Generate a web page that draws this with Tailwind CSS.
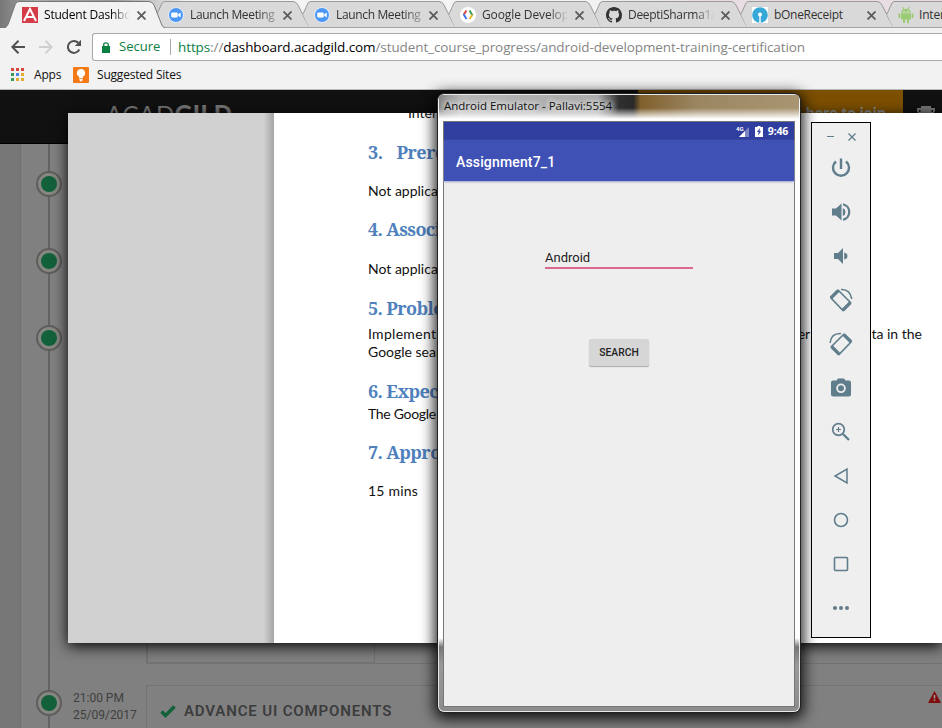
<!DOCTYPE html>
<html lang="en">
<head>
<meta charset="utf-8">
<title>Student Dashboard</title>
<script src="https://cdn.jsdelivr.net/npm/@tailwindcss/browser@4"></script>
</head>
<body class="w-[942px] h-[728px] overflow-hidden bg-[#808080] font-['Open_Sans','Noto_Sans',sans-serif] relative">
<svg class="hidden">
  <symbol id="inactive" viewBox="0 0 158 28"><path d="M12 1.5H141q4 0 5 3L158 28H11L5 14 10.500 3Q11 1.500 12 1.500Z" fill="#d9d9d9"/><path d="M5 14 10 3Q11 1.500 13 1.500H141Q144 1.500 146 5L157.500 28" fill="none" stroke="#999"/></symbol>
  <symbol id="x" viewBox="0 0 9 9"><path d="M.5 .5 8.500 8.500M8.500 .5 .5 8.500" stroke="#5c5c5c" stroke-width="1.800"/></symbol>
  <symbol id="zoomcam" viewBox="0 0 16 16"><circle cx="8" cy="8" r="7.500" fill="#4a97f5" stroke="#e8eef8"/><rect x="3.200" y="5.500" width="6.500" height="5" rx="1" fill="#fff"/><path d="M10.200 7.300 12.700 5.600V10.400L10.200 8.700Z" fill="#fff"/></symbol>
</svg>

<header class="relative flex flex-col h-[90px] bg-[#f2f2f2]">
  <nav class="relative flex h-7 pl-[6px] text-[12px] text-[#333] bg-[linear-gradient(to_right,#777,#aaa_4%,#999_12%,#f4f4f4_20%,#f4f4f4_62%,#e9dde4_75%,#e9dde4)] overflow-hidden">
    <div class="relative z-10 flex items-center w-[146px] shrink-0 pl-4 pt-[2px]">
      <svg class="absolute -left-[6px] top-0 w-[166px] h-7" viewBox="0 0 166 28"><path d="M5 28Q8 26 9 22L15 5Q16 1.500 19 1.500H149Q152 1.500 154 5L161 23Q162 27 165 28Z" fill="#f2f2f2"/><path d="M5 28Q8 26 9 22L15 5Q16 1.500 19 1.500H149Q152 1.500 154 5L161 23Q162 27 165 28" fill="none" stroke="#777"/></svg>
      <svg class="relative w-4 h-4" viewBox="0 0 16 16"><rect width="16" height="16" fill="#d63c48"/><path d="M2 14 8 2 14 14M4.500 10H11.500" fill="none" stroke="#fff" stroke-width="2"/></svg>
      <span class="relative ml-[6px] w-[86px] overflow-hidden whitespace-nowrap text-black tracking-[-0.2px] [mask-image:linear-gradient(to_right,#000_78%,transparent)]">Student Dashbo</span>
      <svg class="relative ml-[7px] w-[9px] h-[9px]"><use href="#x"/></svg>
    </div>
    <div class="relative flex items-center w-[146px] shrink-0 pl-4 pt-[2px]">
      <svg class="absolute left-0 top-0 w-[158px] h-7"><use href="#inactive"/></svg>
      <svg class="relative w-4 h-4"><use href="#zoomcam"/></svg>
      <span class="relative ml-[6px] w-[86px] overflow-hidden whitespace-nowrap tracking-[-0.35px] [mask-image:linear-gradient(to_right,#000_78%,transparent_110%)]">Launch Meeting</span>
      <svg class="relative ml-[7px] w-[9px] h-[9px]"><use href="#x"/></svg>
    </div>
    <div class="relative flex items-center w-[146px] shrink-0 pl-4 pt-[2px]">
      <svg class="absolute left-0 top-0 w-[158px] h-7"><use href="#inactive"/></svg>
      <svg class="relative w-4 h-4"><use href="#zoomcam"/></svg>
      <span class="relative ml-[6px] w-[86px] overflow-hidden whitespace-nowrap tracking-[-0.35px] [mask-image:linear-gradient(to_right,#000_78%,transparent_110%)]">Launch Meeting</span>
      <svg class="relative ml-[7px] w-[9px] h-[9px]"><use href="#x"/></svg>
    </div>
    <div class="relative flex items-center w-[146px] shrink-0 pl-4 pt-[2px]">
      <svg class="absolute left-0 top-0 w-[158px] h-7"><use href="#inactive"/></svg>
      <svg class="relative w-4 h-4" viewBox="0 0 16 16"><circle cx="8" cy="8" r="8" fill="#fff"/><g fill="none" stroke-width="2"><path d="M6.500 3.500 3.800 7.500" stroke="#e0483c"/><path d="M3.500 7 6.500 12" stroke="#4377e8"/><path d="M9.500 3.500 12.500 8.500" stroke="#3b9c58"/><path d="M12.300 8 9.500 12" stroke="#efb52a"/></g></svg>
      <span class="relative ml-[6px] w-[86px] overflow-hidden whitespace-nowrap tracking-[-0.1px] [mask-image:linear-gradient(to_right,#000_78%,transparent)]">Google Develop</span>
      <svg class="relative ml-[7px] w-[9px] h-[9px]"><use href="#x"/></svg>
    </div>
    <div class="relative flex items-center w-[146px] shrink-0 pl-4 pt-[2px]">
      <svg class="absolute left-0 top-0 w-[158px] h-7"><use href="#inactive"/></svg>
      <svg class="relative w-4 h-4" viewBox="0 0 16 16"><path fill="#333" d="M8 0C3.580 0 0 3.580 0 8c0 3.540 2.290 6.530 5.470 7.590.4.070.55-.17.55-.38 0-.19-.01-.82-.01-1.490-2.010.37-2.530-.49-2.690-.94-.09-.23-.48-.94-.82-1.130-.28-.15-.68-.52-.01-.53.63-.01 1.080.58 1.230.82.72 1.210 1.870.87 2.330.66.07-.52.28-.87.51-1.070-1.780-.2-3.640-.89-3.640-3.950 0-.87.31-1.590.82-2.150-.08-.2-.36-1.020.08-2.120 0 0 .67-.21 2.200.82.64-.18 1.320-.27 2-.27s1.360.09 2 .27c1.530-1.040 2.200-.82 2.200-.82.44 1.100.16 1.920.08 2.120.51.56.82 1.270.82 2.150 0 3.070-1.870 3.750-3.650 3.950.29.25.54.73.54 1.480 0 1.070-.01 1.930-.01 2.200 0 .21.15.46.55.38A8.010 8.010 0 0 0 16 8c0-4.420-3.580-8-8-8Z"/></svg>
      <span class="relative ml-[6px] w-[86px] overflow-hidden whitespace-nowrap tracking-[-0.3px] [mask-image:linear-gradient(to_right,#000_78%,transparent)]">DeeptiSharma1/</span>
      <svg class="relative ml-[7px] w-[9px] h-[9px]"><use href="#x"/></svg>
    </div>
    <div class="relative flex items-center w-[146px] shrink-0 pl-4 pt-[2px]">
      <svg class="absolute left-0 top-0 w-[158px] h-7"><use href="#inactive"/></svg>
      <svg class="relative w-4 h-4" viewBox="0 0 16 16"><rect width="16" height="16" fill="#fff"/><circle cx="8" cy="8" r="7.800" fill="#36a9d8"/><circle cx="8" cy="7.500" r="2" fill="#fff"/><path d="M7.300 8H8.700V16H7.300Z" fill="#fff"/></svg>
      <span class="relative ml-[6px] w-[86px] overflow-hidden whitespace-nowrap tracking-[-0.3px]">bOneReceipt</span>
      <svg class="relative ml-[7px] w-[9px] h-[9px]"><use href="#x"/></svg>
    </div>
    <div class="relative flex items-center w-[146px] shrink-0 pl-4 pt-[2px]">
      <svg class="absolute left-0 top-0 w-[158px] h-7"><use href="#inactive"/></svg>
      <svg class="relative w-4 h-4" viewBox="0 0 16 16" fill="#9bcb74"><path d="M3 5.500Q3.400 1.700 8 1.700T13 5.500ZM3 6.200H13V12.500H3ZM.500 6.500H2.300V11H.500ZM13.700 6.500H15.500V11H13.700ZM5 12H7V16H5ZM9 12H11V16H9Z"/><path d="M4.500 0 6 2.500M11.500 0 10 2.500" stroke="#9bcb74"/><circle cx="6" cy="4" r=".6" fill="#fff"/><circle cx="10" cy="4" r=".6" fill="#fff"/></svg>
      <span class="relative ml-[5px] whitespace-nowrap tracking-[-0.2px]">Internet</span>
    </div>
    <div class="absolute left-[164px] right-0 bottom-0 h-px bg-[#a3a3a3]"></div>
  </nav>
  <div class="flex items-center h-[38px] pl-[11px]">
    <svg class="w-[14px] h-[14px]" viewBox="0 0 14 14" fill="none" stroke="#505050" stroke-width="2"><path d="M14 7H1.500M7.500 .8 1.300 7 7.500 13.200"/></svg>
    <svg class="ml-[14px] w-[14px] h-[14px]" viewBox="0 0 14 14" fill="none" stroke="#d0d0d0" stroke-width="2"><path d="M0 7H12.500M6.500 .8 12.700 7 6.500 13.200"/></svg>
    <svg class="ml-[13px] w-[16px] h-[16px]" viewBox="0 0 16 16"><path d="M13.300 10.500A6 6 0 1 1 12.300 3.800" fill="none" stroke="#505050" stroke-width="2"/><path d="M15 .8V7H8.800Z" fill="#505050"/></svg>
    <div class="flex items-center ml-[10px] h-[28px] flex-1 border border-r-0 border-[#a9a9a9] rounded-l-[3px] bg-white pl-[9px] text-[13.5px] whitespace-nowrap">
      <svg class="w-2 h-[11px] shrink-0" viewBox="0 0 8 11"><path d="M0 4H8V11H0Z" fill="#0b8043"/><path d="M1.700 5V2.800Q1.700.8 4 .8T6.300 2.800V5" fill="none" stroke="#0b8043" stroke-width="1.300"/></svg>
      <span class="ml-[9px] w-[51px] text-[#0b8043] shrink-0 text-[13px]">Secure</span>
      <span class="w-px h-4 bg-[#aaa]"></span>
      <span class="ml-[7px] text-[#858585] tracking-[-0.1px]"><span class="text-[#0b8043]">https</span>://<span class="text-black">dashboard.acadgild.com</span>/student_course_progress/android-development-training-certification</span>
    </div>
  </div>
  <div class="flex items-center h-[17px] text-[12px] text-[#111] pl-[11px]">
    <svg class="w-[13px] h-[13px]" viewBox="0 0 13 13"><path d="M0 0H3V3H0ZM5 0H8V3H5ZM10 0H13V3H10Z" fill="#d8453c"/><path d="M0 5H3V8H0ZM0 10H3V13H0Z" fill="#3a9a57"/><path d="M5 5H8V8H5Z" fill="#4a86e0"/><path d="M10 5H13V8H10ZM5 10H8V13H5ZM10 10H13V13H10Z" fill="#e4ac2e"/></svg>
    <span class="ml-[10px] w-[39px] tracking-[-0.2px]">Apps</span>
    <svg class="w-4 h-4" viewBox="0 0 16 16"><rect width="16" height="16" rx="1" fill="#f47a18"/><path d="M8 2A4 4 0 0 1 10 9.500V11H6V9.500A4 4 0 0 1 8 2ZM6.400 11.700H9.600V13L8.500 14.500H7.500L6.400 13Z" fill="#fff"/></svg>
    <span class="ml-2 tracking-[-0.2px]">Suggested Sites</span>
  </div>
  <div class="absolute bottom-0 left-0 right-0 h-px bg-[#b5b8ba]"></div>
</header>

<main class="h-[638px]">
  <div class="flex justify-between h-[54px] bg-[#111] border-b border-black">
    <div class="ml-[106px] mt-[13px] text-[24px] leading-[22px] text-[#777] font-['Lato',sans-serif] tracking-[0.6px]">ACAD<span class="font-black">GILD</span></div>
    <div class="flex">
      <div class="w-[265px] bg-[#7d5000] text-right pr-[17px] pt-[13px] text-[14px] leading-5 font-bold text-[#8b8b8b]">Click here to join</div>
      <div class="w-[39px] pl-[14px] pt-4"><svg class="w-[18px] h-[14px]" viewBox="0 0 18 14"><path d="M4 0H14V2H18V5Q17 8 13 8L10 11H8L5 8Q1 8 0 5V2H4Z" fill="#777"/><path d="M2 4H3.500V6H2ZM14.500 4H16V6H14.500Z" fill="#111"/></svg></div>
    </div>
  </div>
  <div class="flex h-[584px] bg-[#808080]">
    <div class="w-[21px] bg-[#777] border-r border-[#707070]"></div>
    <div class="flex flex-col items-center w-[56px] bg-[linear-gradient(#636363,#636363)] bg-[length:2px_100%] bg-no-repeat bg-center pt-[27px] gap-[51px]">
      <div class="w-[26px] h-[26px] rounded-full border-2 border-[#5e5c5c] bg-[#858780] p-[3px]"><div class="w-full h-full rounded-full bg-[#12613a]"></div></div>
      <div class="w-[26px] h-[26px] rounded-full border-2 border-[#5e5c5c] bg-[#858780] p-[3px]"><div class="w-full h-full rounded-full bg-[#12613a]"></div></div>
      <div class="w-[26px] h-[26px] rounded-full border-2 border-[#5e5c5c] bg-[#858780] p-[3px]"><div class="w-full h-full rounded-full bg-[#12613a]"></div></div>
      <div class="mt-[288px] w-[26px] h-[26px] rounded-full border-2 border-[#5e5c5c] bg-[#858780] p-[3px]"><div class="w-full h-full rounded-full bg-[#12613a]"></div></div>
    </div>
    <div class="w-[69px] -ml-1 pt-[546px] text-[12px] leading-[17px] text-[#3f3f3f] font-['Roboto',sans-serif] whitespace-nowrap">21:00 PM<br>25/09/2017</div>
    <div class="flex-1 ml-1 flex flex-col">
      <div class="h-[520px] border-l-2 border-b border-[#737373]"><div class="w-[227px] h-full border-r border-b border-[#737373]"></div></div>
      <div class="mt-[21px] flex-1 flex justify-between items-start border-l border-t border-[#737373] pl-[13px] pt-[16px]">
        <div class="flex items-center h-[19px]">
          <svg class="w-[16px] h-[13px]" viewBox="0 0 16 13"><path d="M1.500 6.500 5.500 10.500 14.500 1.500" fill="none" stroke="#12613a" stroke-width="3.500"/></svg>
          <span class="ml-[8px] text-[15px] font-semibold text-[#3c3c3c] font-['Roboto',sans-serif] tracking-[0.850px] whitespace-nowrap">ADVANCE UI COMPONENTS</span>
        </div>
        <svg class="-mt-[11px] mr-[1px] w-[13px] h-[12px]" viewBox="0 0 13 12"><path d="M6.500 0 13 12H0Z" fill="#800c0c"/><path d="M5.700 4H7.300V7.500H5.700ZM5.700 8.500H7.300V10H5.700Z" fill="#999"/></svg>
      </div>
    </div>
  </div>
</main>

<section class="absolute left-[68px] top-[113px] w-[874px] h-[530px] shadow-[0_3px_14px_#000]"></section>
<section class="absolute left-[68px] top-[113px] w-[874px] h-[530px] flex bg-[#d1d1d1] overflow-hidden">
  <div class="w-[206px] bg-gradient-to-l from-[#a4a4a4] to-[#d1d1d1] to-5%"></div>
  <div class="flex-1 bg-white pl-[94px] flex flex-col text-[14px] leading-[18px] text-[#111] font-['Lato',sans-serif] whitespace-nowrap">
    <p class="-mt-[9px] pl-10">Inter</p>
    <h2 class="mt-[21px] text-[18px] font-bold text-[#4f81bd] font-['Noto_Serif','Liberation_Serif',serif] tracking-[-0.5px]">3.<span class="ml-[14px]">Prereq</span></h2>
    <p class="mt-[21px]">Not applicable</p>
    <h2 class="mt-[20px] text-[18px] font-bold text-[#4f81bd] font-['Noto_Serif','Liberation_Serif',serif] tracking-[-0.6px]">4. Associ</h2>
    <p class="mt-[22px]">Not applicable</p>
    <h2 class="mt-[21px] text-[18px] font-bold text-[#4f81bd] font-['Noto_Serif','Liberation_Serif',serif] tracking-[-0.6px]">5. Problem</h2>
    <p class="mt-[8px] flex justify-between pr-5"><span class="tracking-[0.3px]">Implement</span><span>user search data in the</span></p>
    <p>Google search</p>
    <h2 class="mt-[21px] text-[18px] font-bold text-[#4f81bd] font-['Noto_Serif','Liberation_Serif',serif] tracking-[-0.6px]">6. Expect</h2>
    <p class="mt-[5px] tracking-[-0.3px]">The Google</p>
    <h2 class="mt-[20px] text-[18px] font-bold text-[#4f81bd] font-['Noto_Serif','Liberation_Serif',serif] tracking-[-0.6px]">7. Approx</h2>
    <p class="mt-[21px] tracking-[0.2px]">15 mins</p>
  </div>
</section>

<section class="absolute left-[437px] top-[93px] w-[364px] h-[620px] rounded-[7px] border border-[#222] shadow-[0_3px_14px_3px_rgba(0,0,0,0.85)] overflow-hidden bg-[#8d8d8d]">
  <div class="w-full h-full rounded-[6px] border border-white/80 bg-[linear-gradient(#999_0,#fff_26px,#fff_543px,#777_552px,#999_570px,#8c8c8c)] px-[4px] pb-[4px]">
    <div class="-mx-1 h-[26px] pl-[5px] pt-[2px] text-[11.5px] leading-[18px] text-[#111] tracking-[0px] bg-[linear-gradient(to_bottom,transparent_50%,#fff_92%),linear-gradient(to_right,#858585,#b5b5b5_6%,#aaa_44%,#303030_50%,#292929_54%,#80602c_56%,#9b8662_72%,#a99571)]"><span class="[text-shadow:0_0_6px_#fff,0_0_6px_#fff]">Android Emulator - Pallavi:5554</span></div>
    <div class="h-[586px] border border-[#777] bg-[#eee] flex flex-col font-['Roboto',sans-serif]">
      <div class="flex items-center justify-end h-[18px] shrink-0 bg-[#303f9f] pr-[6px] text-white">
        <svg class="w-[13px] h-[12px]" viewBox="0 0 13 12"><path d="M13 2V12H3Z" fill="#7c86c5"/><path d="M9 6V12H3Z" fill="#fff"/><text x="0" y="5.500" font-size="6" font-weight="700" fill="#fff">4G</text></svg>
        <svg class="ml-[6px] w-2 h-[11px]" viewBox="0 0 8 11"><path d="M0 1H2.500V0H5.500V1H8V11H0Z" fill="#fff"/><path d="M5 2 2 6H3.700L3 9.500 6.200 5.200H4.500Z" fill="#303f9f"/></svg>
        <span class="ml-[5px] text-[10.5px] leading-4 font-bold font-['Noto_Sans',sans-serif] tracking-[-0.2px]">9:46</span>
      </div>
      <div class="h-[41px] shrink-0 bg-[#3f51b5] pl-3 text-white text-[14px] font-medium leading-[44px] tracking-[0.150px] shadow-[0_1px_2px_#9aa0c8]">Assignment7_1</div>
      <div class="ml-[101px] mt-[67px] w-[148px] h-[21px] border-b-2 border-[#d9698f] text-[13px] leading-[19px] text-[#222]">Android</div>
      <div class="mt-[70px] ml-[145px] w-[60px] h-[27px] rounded-[2px] bg-[#d6d6d6] shadow-[0_1px_1px_#aaa] text-center text-[10.300px] font-medium leading-[27px] text-[#222]">SEARCH</div>
    </div>
  </div>
</section>

<aside class="absolute left-[811px] top-[122px] w-[60px] h-[516px] border border-black bg-[#efefef] flex flex-col items-center text-[#5f7d8b]">
  <div class="flex items-center h-[23px] pt-1 gap-[14px] w-full pl-[15px]">
    <div class="w-[7px] h-px bg-[#5f7d8b]"></div>
    <svg class="w-[8px] h-[8px]" viewBox="0 0 8 8"><path d="M.5 .5 7.500 7.500M7.500 .5 .5 7.500" stroke="currentColor" stroke-width="1.300"/></svg>
  </div>
  <div class="flex flex-col items-center [&>svg]:w-6 [&>svg]:h-6 gap-5 mt-[10px]">
    <svg viewBox="0 0 24 24" fill="none" stroke="currentColor" stroke-width="2.400"><path d="M12 2.500V13M7 5.500A8 8 0 1 0 17 5.500"/></svg>
    <svg viewBox="0 0 24 24" fill="currentColor"><path d="M3 8.500V15.500H7L12.500 20.500V3.500L7 8.500ZM13.800 8V16Q16.500 15 16.500 12T13.800 8Z"/><path d="M14 4.200A8 8 0 0 1 14 19.800" fill="none" stroke="currentColor" stroke-width="2.200"/></svg>
    <svg viewBox="0 0 24 24" fill="currentColor"><path d="M5 9V15H9L14 20V4L9 9ZM15.200 8.500V15.500Q18.500 15 18.500 12T15.200 8.500Z"/></svg>
    <svg viewBox="0 0 24 24"><g fill="none" stroke="currentColor"><path d="M9.500 2.500 21.500 14.500 14 22.500 2 10Z" stroke-width="1.600"/><path d="M1.800 10 9.300 2.500M14 22 21.500 14.500" stroke-width="3.200"/><path d="M12 1.500Q21 1 22.800 11" stroke-width="1.500"/></g></svg>
    <svg viewBox="0 0 24 24"><g fill="none" stroke="currentColor"><path d="M14.500 2.500 2.500 14.500 10 22.500 22 10Z" stroke-width="1.600"/><path d="M22.200 10 14.700 2.500M10 22 2.500 14.500" stroke-width="3.200"/><path d="M12 1.500Q2 1 1 11" stroke-width="1.500"/></g></svg>
    <svg viewBox="0 0 24 24"><path fill="currentColor" fill-rule="evenodd" d="M9 2.500H15L16.500 4.500H20Q22 4.500 22 6.500V18.500Q22 20.500 20 20.500H4Q2 20.500 2 18.500V6.500Q2 4.500 4 4.500H7.500ZM12 7.500A4.800 4.800 0 1 0 12 17.100A4.800 4.800 0 1 0 12 7.500ZM12 9.300A3 3 0 1 1 12 15.300A3 3 0 1 1 12 9.300Z"/></svg>
    <svg viewBox="0 0 24 24" fill="none" stroke="currentColor" stroke-width="1.700"><circle cx="9.500" cy="9.500" r="5.800"/><path d="M14 14 20 20" stroke-width="2.300"/><path d="M9.500 7V12M7 9.500H12" stroke-width="1.200"/></svg>
    <svg viewBox="0 0 24 24" fill="none" stroke="currentColor" stroke-width="1.500"><path d="M18 5V19L6 12Z"/></svg>
    <svg viewBox="0 0 24 24" fill="none" stroke="currentColor" stroke-width="1.600"><circle cx="12" cy="12" r="6.500"/></svg>
    <svg viewBox="0 0 24 24" fill="none" stroke="currentColor" stroke-width="1.600"><rect x="5.500" y="5.500" width="13" height="13" rx="1"/></svg>
    <svg viewBox="0 0 24 24" fill="currentColor"><circle cx="6" cy="12" r="2"/><circle cx="12" cy="12" r="2"/><circle cx="18" cy="12" r="2"/></svg>
  </div>
</aside>
</body>
</html>
